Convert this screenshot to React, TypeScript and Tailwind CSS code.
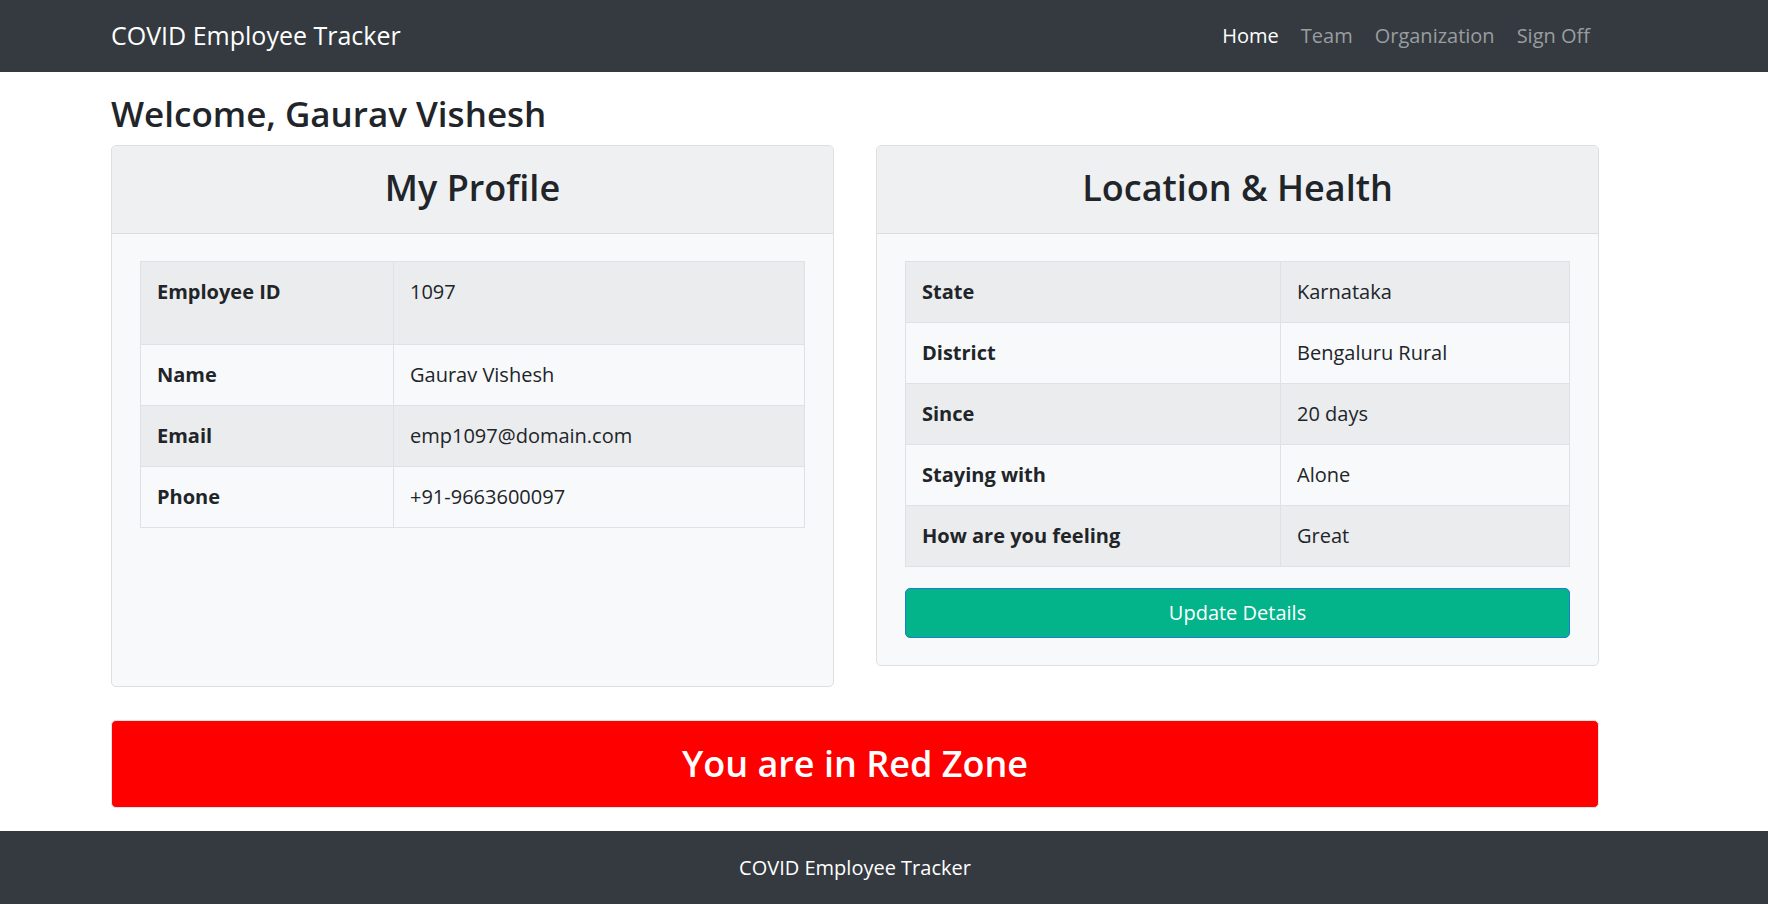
import React from 'react';

const PROFILE = [
  { label: 'Employee ID', value: '1097' },
  { label: 'Name', value: 'Gaurav Vishesh' },
  { label: 'Email', value: 'emp1097@domain.com' },
  { label: 'Phone', value: '+91-9663600097' },
];

const HEALTH = [
  { label: 'State', value: 'Karnataka' },
  { label: 'District', value: 'Bengaluru Rural' },
  { label: 'Since', value: '20 days' },
  { label: 'Staying with', value: 'Alone' },
  { label: 'How are you feeling', value: 'Great' },
];

type Row = { label: string; value: string };

function InfoTable({ rows, labelWidth, firstTall }: { rows: Row[]; labelWidth: string; firstTall?: boolean }) {
  return (
    <table className="w-full border-collapse text-[20px] leading-[30px]">
      <tbody>
        {rows.map((row, idx) => (
          <tr key={row.label} className={idx % 2 === 0 ? 'bg-[#ebeced]' : ''}>
            <th
              className={`${labelWidth} border border-[#dee2e6] px-[16px] py-[15px] text-left align-top font-bold ${
                firstTall && idx === 0 ? 'h-[83px]' : ''
              }`}
            >
              {row.label}
            </th>
            <td className="border border-[#dee2e6] px-[16px] py-[15px] align-top font-normal">{row.value}</td>
          </tr>
        ))}
      </tbody>
    </table>
  );
}

function Card({ title, children, bodyClass }: { title: string; children: React.ReactNode; bodyClass?: string }) {
  return (
    <div className="rounded-[5px] border border-[#dfdfdf] overflow-hidden bg-[#f8f9fa]">
      <div className="h-[88px] bg-[#eff0f2] border-b border-[#dcdde0] flex items-center justify-center pb-[4px]">
        <h2 className="text-[36px] leading-[48px] font-semibold">{title}</h2>
      </div>
      <div className={`px-[28px] pt-[27px] pb-[27px] ${bodyClass ?? ''}`}>{children}</div>
    </div>
  );
}

export default function App() {
  return (
    <div className="min-h-screen bg-white text-[#212529] font-['Open_Sans','Noto_Sans',sans-serif]">
      {/* NAVBAR */}
      <nav className="h-[72px] bg-[#343a40] flex items-center">
        <div className="ml-[111px] w-[1488px] flex items-center justify-between">
          <span className="text-[25px] text-white">COVID Employee Tracker</span>
          <ul className="flex items-center text-[20px]">
            <li className="px-[11px] text-white">Home</li>
            <li className="px-[11px] text-[#9a9da0]">Team</li>
            <li className="px-[11px] text-[#9a9da0]">Organization</li>
            <li className="pl-[11px] pr-[9px] text-[#9a9da0]">Sign Off</li>
          </ul>
        </div>
      </nav>

      <main className="ml-[111px] w-[1488px] pt-[15px]">
        <h2 className="text-[35px] leading-[48px] font-semibold pt-[3px] mb-[7px]">Welcome, Gaurav Vishesh</h2>

        <div className="grid grid-cols-2 gap-[42px] items-start">
          <Card title="My Profile" bodyClass="h-[452px]">
            <InfoTable rows={PROFILE} labelWidth="w-[253px]" firstTall />
          </Card>
          <Card title="Location & Health">
            <InfoTable rows={HEALTH} labelWidth="w-[375px]" />
            <button className="mt-[21px] h-[50px] w-full rounded-[5px] bg-[#03b38a] border border-[#1b7fd0] text-white text-[20px]">
              Update Details
            </button>
          </Card>
        </div>

        {/* ZONE BANNER */}
        <div className="mt-[33px] h-[88px] rounded-[5px] border border-[#e3e3e3] bg-[#ff0000] flex items-center justify-center">
          <span className="text-white text-[36px] font-semibold">You are in Red Zone</span>
        </div>
      </main>

      <footer className="mt-[23px] h-[73px] bg-[#343a40] flex items-center justify-center pr-[58px] text-white text-[20px]">
        COVID Employee Tracker
      </footer>
    </div>
  );
}
